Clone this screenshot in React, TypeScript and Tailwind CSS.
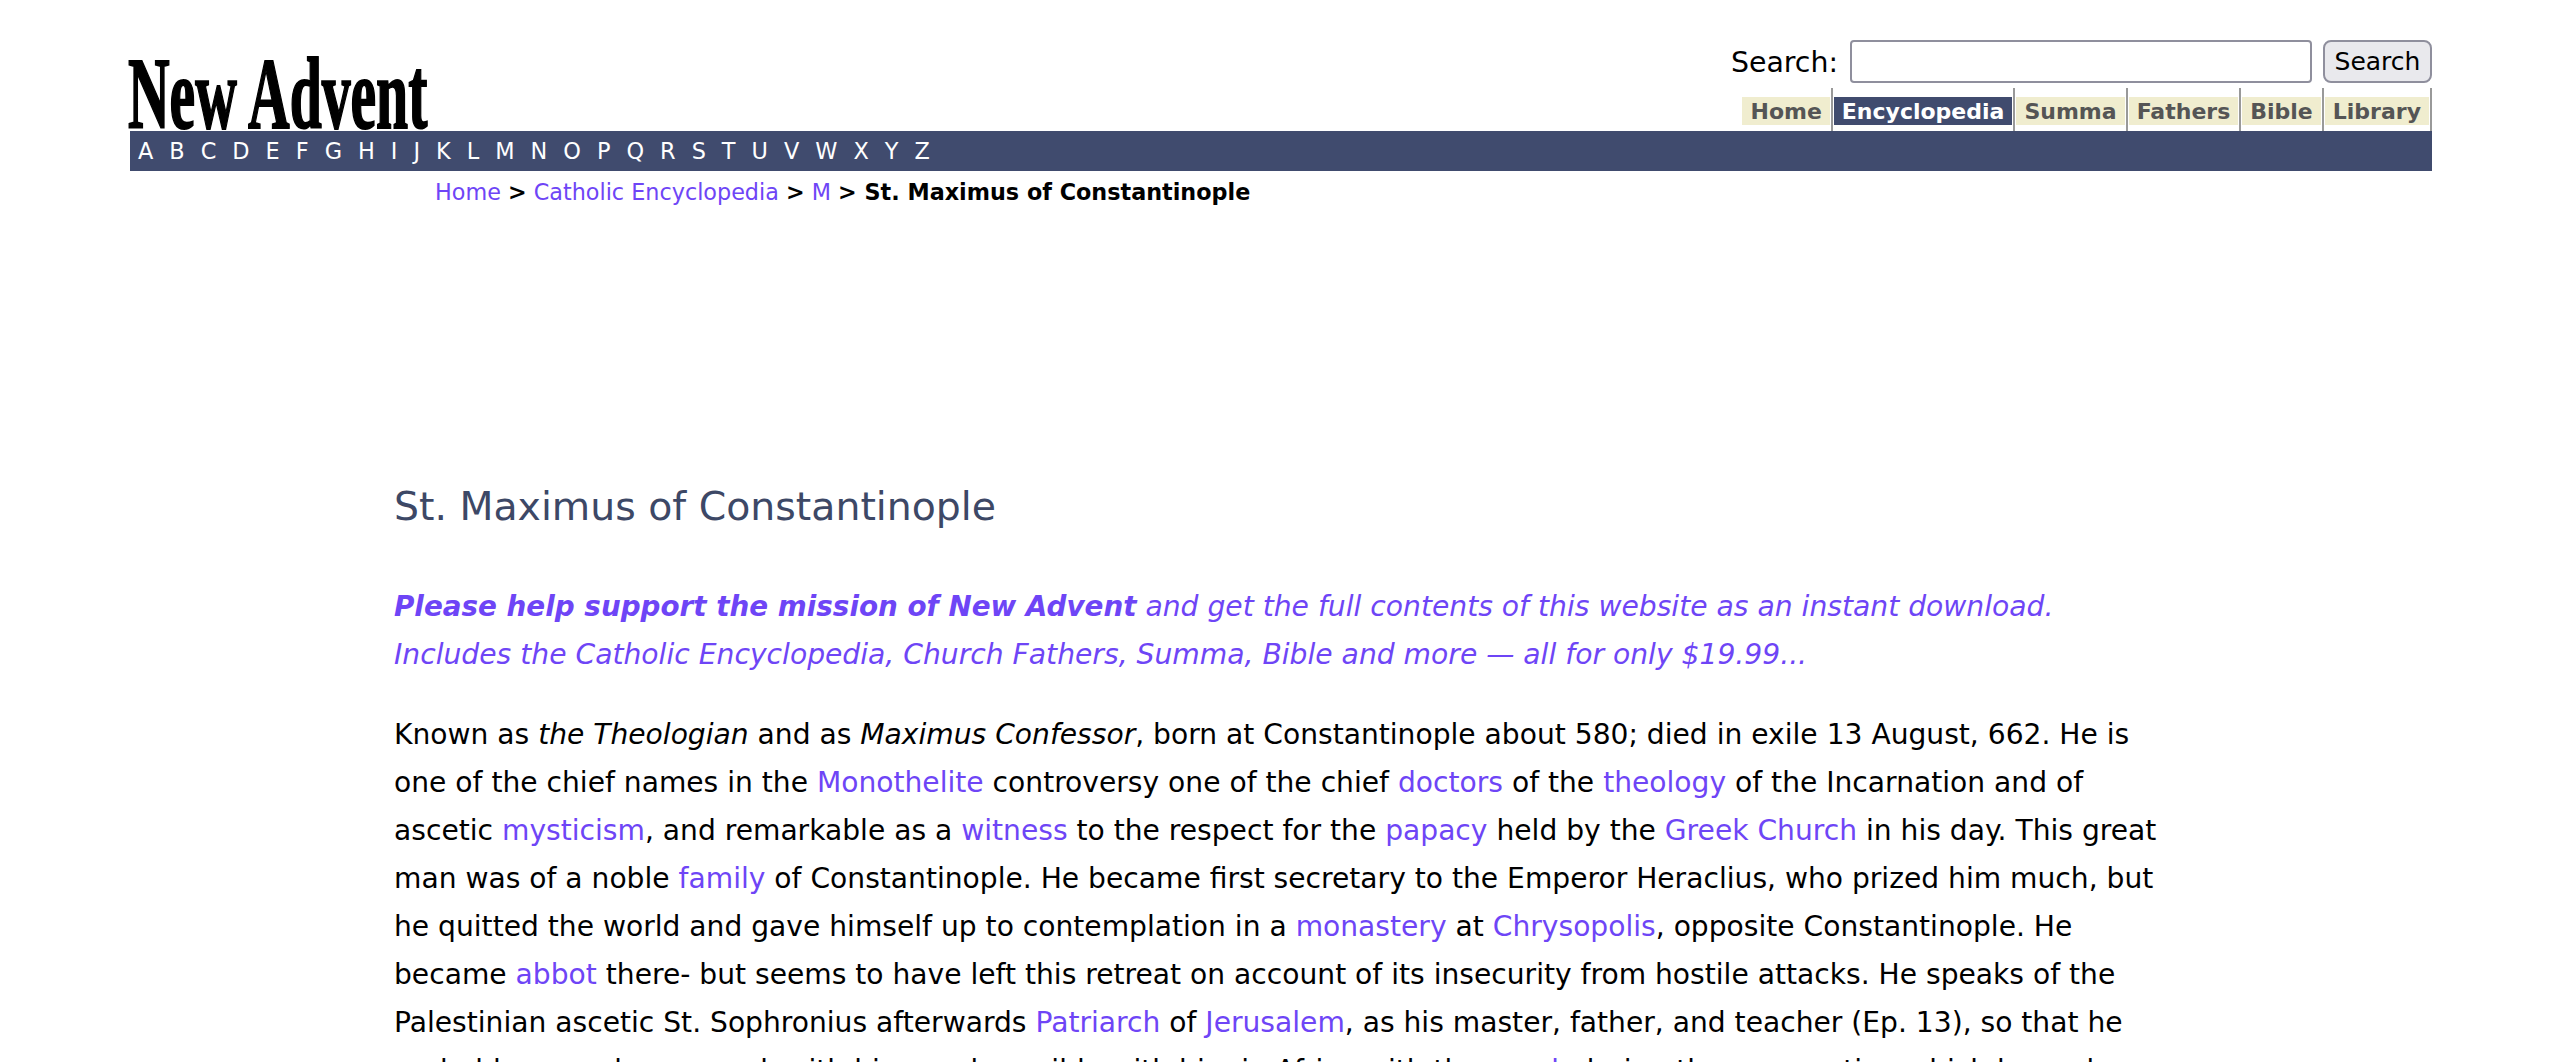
function A({ children }: { children: React.ReactNode }) {
  return <a className="text-[#6e45f6]">{children}</a>;
}

const letters = 'ABCDEFGHIJKLMNOPQRSTUVWXYZ'.split('');
const tabs = ['Home', 'Encyclopedia', 'Summa', 'Fathers', 'Bible', 'Library'];

export default function App() {
  return (
    <div className='h-[1062px] overflow-hidden bg-white text-black font-["DejaVu_Sans",sans-serif]'>
      <header className="ml-[130px] mr-[128px] pt-10">
        <div className="flex h-[91px] justify-between">
          {/* logo: blackletter image in the original, heavy condensed serif here */}
          <div className='-ml-[2px] mt-[17px] w-[310px] origin-left scale-x-[0.565] whitespace-nowrap font-["Liberation_Serif",serif] text-[102px] font-bold leading-[74px] text-black [-webkit-text-stroke:2px_black]'>
            New Advent
          </div>
          <div className="flex flex-col items-end">
            <form className="flex items-center">
              <label className="mr-[12px] mt-[2px] text-[28.4px] leading-10">Search:</label>
              <input className="h-[43px] w-[462px] rounded-[4px] border-2 border-[#8f8f9d] bg-white" />
              <button className="ml-[11px] h-[43px] w-[109px] rounded-[8px] border-2 border-[#8f8f9d] bg-[#e9e9ed] pt-[1px] text-[25px]">Search</button>
            </form>
            <nav className="mt-[5px] flex h-[43px] text-[22px] font-bold text-[#555]">
              {tabs.map((t) => (
                <div key={t} className="flex border-r-2 border-[#999] px-[1px]">
                  <span className={t === 'Encyclopedia' ? 'mt-[9px] h-[28px] bg-[#404b6e] px-2 leading-[30px] text-white' : 'mt-[9px] h-[28px] bg-[#f0edcf] px-2 leading-[30px]'}>{t}</span>
                </div>
              ))}
            </nav>
          </div>
        </div>
        <div className="flex h-10 items-center gap-4 bg-[#404b6e] pl-2 pt-[2px] text-[22.4px] text-white">
          {letters.map((l) => <a key={l}>{l}</a>)}
        </div>
      </header>
      <div className="ml-[435px] mt-[5px] text-[22.3px] leading-8">
        <A>Home</A> <b>&gt;</b> <A>Catholic Encyclopedia</A> <b>&gt;</b> <A>M</A> <b>&gt; St. Maximus of Constantinople</b>
      </div>
      <main className="ml-[394px] mr-[396px] mt-[272px]">
        <h1 className="text-[39.4px] font-normal leading-[52px] text-[#3d4866]">St. Maximus of Constantinople</h1>
        <p className="mt-[51px] text-[28.2px] italic leading-[48px] text-[#6e45f6]">
          <b className="text-[27.8px]">Please help support the mission of New Advent</b> and get the full contents of this website as an instant download. Includes the Catholic Encyclopedia, Church Fathers, Summa, Bible and more — all for only $19.99...
        </p>
        <p className="mt-[32px] text-[28.15px] leading-[48px]">
          Known as <i>the Theologian</i> and as <i>Maximus Confessor</i>, born at Constantinople about 580; died in exile 13 August, 662. He is one of the chief names in the <A>Monothelite</A> controversy one of the chief <A>doctors</A> of the <A>theology</A> of the Incarnation and of ascetic <A>mysticism</A>, and remarkable as a <A>witness</A> to the respect for the <A>papacy</A> held by the <A>Greek Church</A> in his day. This great man was of a noble <A>family</A> of Constantinople. He became first secretary to the Emperor Heraclius, who prized him much, but he quitted the world and gave himself up to contemplation in a <A>monastery</A> at <A>Chrysopolis</A>, opposite Constantinople. He became <A>abbot</A> there- but seems to have left this retreat on account of its insecurity from hostile attacks. He speaks of the Palestinian ascetic St. Sophronius afterwards <A>Patriarch</A> of <A>Jerusalem</A>, as his master, father, and teacher (Ep. 13), so that he probably served as a monk with him, and possibly with him in Africa with the <A>monk</A> during the persecution which he and
        </p>
      </main>
    </div>
  );
}
